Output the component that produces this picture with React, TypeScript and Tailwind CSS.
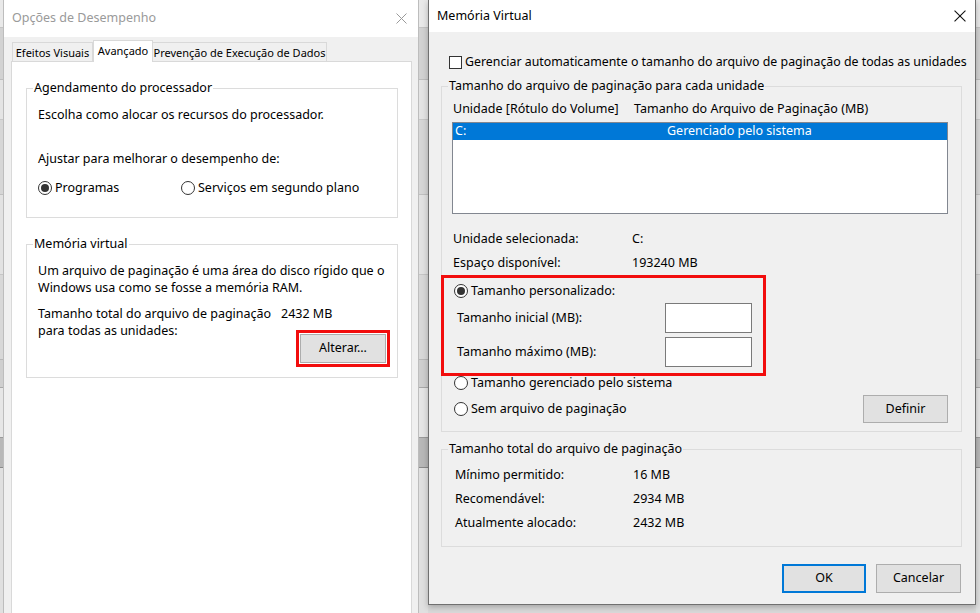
import React from "react";

function XIcon({ color, size = 11 }: { color: string; size?: number }) {
  return (
    <svg width={size} height={size} viewBox="0 0 11 11" className="shrink-0">
      <path d="M0.5 0.5 L10.5 10.5 M10.5 0.5 L0.5 10.5" stroke={color} strokeWidth="1" fill="none" />
    </svg>
  );
}

function Radio({ checked }: { checked?: boolean }) {
  return (
    <span className="w-[14px] h-[14px] rounded-full border border-[#333] bg-white flex items-center justify-center shrink-0">
      {checked && <span className="w-[8px] h-[8px] rounded-full bg-[#333]" />}
    </span>
  );
}

function LeftDialog() {
  return (
    <div className="w-[416px] h-[640px] shrink-0 flex flex-col bg-[#f0f0f0] border-x border-[#bdbdbd]">
      <div className="h-[37px] bg-white flex items-center justify-between pl-[8px] pr-[11px] shrink-0">
        <span className="text-[12.5px] text-[#9a9a9a]">Opções de Desempenho</span>
        <XIcon color="#9a9a9a" />
      </div>
      <div className="pl-[7px] pt-[3px]">
        <div className="flex items-end h-[21px] pl-[1px] text-[11px] text-black whitespace-nowrap">
          <div className="w-[81px] h-[19px] border border-b-0 border-[#d9d9d9] bg-[#f0f0f0] flex items-center justify-center leading-none">
            Efeitos Visuais
          </div>
          <div className="relative z-10 w-[60px] h-[22px] -mb-px border border-b-0 border-[#d9d9d9] bg-white flex items-center justify-center leading-none pb-[3px]">
            Avançado
          </div>
          <div className="w-[174px] h-[19px] border border-b-0 border-l-0 border-[#d9d9d9] bg-[#f0f0f0] flex items-center justify-center leading-none">
            Prevenção de Execução de Dados
          </div>
        </div>
        <div className="w-[401px] h-[570px] bg-white border border-[#d9d9d9] text-[12.5px] text-black">
          <fieldset className="ml-[14px] mt-[17px] w-[372px] border border-[#dcdcdc]">
            <legend className="ml-[6px] px-[1px] leading-[18px]">Agendamento do processador</legend>
            <div className="pl-[11px] pb-[20px]">
              <div className="mt-[9px] leading-[18px]">Escolha como alocar os recursos do processador.</div>
              <div className="mt-[26px] leading-[18px]">Ajustar para melhorar o desempenho de:</div>
              <div className="mt-[11px] flex items-center h-[18px]">
                <div className="w-[143px] flex items-center gap-[3px]">
                  <Radio checked />
                  <span>Programas</span>
                </div>
                <div className="flex items-center gap-[3px]">
                  <Radio />
                  <span>Serviços em segundo plano</span>
                </div>
              </div>
            </div>
          </fieldset>
          <fieldset className="ml-[14px] mt-[17px] w-[372px] border border-[#dcdcdc]">
            <legend className="ml-[6px] px-[1px] leading-[18px]">Memória virtual</legend>
            <div className="pl-[11px] pb-[10px]">
              <div className="mt-[9px] leading-[17px]">
                <div>Um arquivo de paginação é uma área do disco rígido que o</div>
                <div>Windows usa como se fosse a memória RAM.</div>
              </div>
              <div className="mt-[9px] leading-[17px]">
                <div className="flex">
                  <span className="w-[243px] shrink-0">Tamanho total do arquivo de paginação</span>
                  <span>2432 MB</span>
                </div>
                <div>para todas as unidades:</div>
              </div>
              <div className="-mt-[9px] flex justify-end pr-[7px]">
                <div className="border-[3px] border-[#f20d0d] p-[1px]">
                  <div className="w-[86px] h-[29px] bg-[#e1e1e1] border border-[#adadad] flex items-center justify-center">
                    Alterar...
                  </div>
                </div>
              </div>
            </div>
          </fieldset>
        </div>
      </div>
    </div>
  );
}

function RightDialog() {
  return (
    <div className="relative w-[548px] h-[605px] shrink-0 flex flex-col border-x border-b border-[#707070] bg-[#f0f0f0] text-[12.5px] text-black shadow-[0_2px_6px_rgba(0,0,0,0.25)]">
      <div className="h-[32px] bg-white flex items-center justify-between pl-[8px] pr-[9px] shrink-0">
        <span className="text-[12.5px]">Memória Virtual</span>
        <XIcon color="#111" size={12} />
      </div>
      <div className="flex flex-col flex-1">
        <div className="mt-[21px] pl-[20px] flex items-center gap-[3px] h-[18px] whitespace-nowrap text-[12.35px]">
          <span className="w-[13px] h-[13px] border border-[#333] bg-white shrink-0" />
          <span>Gerenciar automaticamente o tamanho do arquivo de paginação de todas as unidades</span>
        </div>

        <fieldset className="ml-[12px] mt-[6px] w-[521px] border border-[#dcdcdc]">
          <legend className="ml-[6px] px-[1px] leading-[18px]">Tamanho do arquivo de paginação para cada unidade</legend>
          <div className="pb-[8px]">
            <div className="mt-[5px] pl-[11px] flex leading-[18px]">
              <span className="w-[181px] shrink-0">Unidade [Rótulo do Volume]</span>
              <span>Tamanho do Arquivo de Paginação (MB)</span>
            </div>
            <div className="ml-[10px] mt-[4px] w-[496px] h-[92px] bg-white border border-[#828790]">
              <div className="h-[17px] bg-[#0078d7] text-white flex items-center">
                <span className="w-[214px] pl-[2px] shrink-0">C:</span>
                <span>Gerenciado pelo sistema</span>
              </div>
            </div>
            <div className="mt-[13px] pl-[11px]">
              <div className="h-[24px] flex items-center">
                <span className="w-[179px] shrink-0">Unidade selecionada:</span>
                <span>C:</span>
              </div>
              <div className="h-[24px] flex items-center">
                <span className="w-[179px] shrink-0">Espaço disponível:</span>
                <span>193240 MB</span>
              </div>
            </div>
            <div className="mt-[7px] ml-[12px] h-[18px] flex items-center gap-[3px]">
              <Radio checked />
              <span>Tamanho personalizado:</span>
            </div>
            <div className="mt-[3px] ml-[15px] h-[30px] flex items-center">
              <span className="w-[208px] shrink-0">Tamanho inicial (MB):</span>
              <span className="w-[87px] h-[30px] bg-white border border-[#7a7a7a]" />
            </div>
            <div className="mt-[4px] ml-[15px] h-[30px] flex items-center">
              <span className="w-[208px] shrink-0">Tamanho máximo (MB):</span>
              <span className="w-[87px] h-[30px] bg-white border border-[#7a7a7a]" />
            </div>
            <div className="mt-[7px] ml-[12px] h-[18px] flex items-center gap-[3px]">
              <Radio />
              <span>Tamanho gerenciado pelo sistema</span>
            </div>
            <div className="mt-[3px] ml-[12px] mr-[13px] h-[28px] flex items-center justify-between">
              <div className="flex items-center gap-[3px]">
                <Radio />
                <span>Sem arquivo de paginação</span>
              </div>
              <div className="w-[85px] h-[28px] bg-[#e1e1e1] border border-[#adadad] flex items-center justify-center">
                Definir
              </div>
            </div>
          </div>
        </fieldset>

        <fieldset className="ml-[12px] mt-[8px] w-[521px] border border-[#dcdcdc]">
          <legend className="ml-[6px] px-[1px] leading-[18px]">Tamanho total do arquivo de paginação</legend>
          <div className="mt-[5px] pl-[13px] pb-[11px]">
            <div className="h-[24px] flex items-center">
              <span className="w-[178px] shrink-0">Mínimo permitido:</span>
              <span>16 MB</span>
            </div>
            <div className="h-[24px] flex items-center">
              <span className="w-[178px] shrink-0">Recomendável:</span>
              <span>2934 MB</span>
            </div>
            <div className="h-[24px] flex items-center">
              <span className="w-[178px] shrink-0">Atualmente alocado:</span>
              <span>2432 MB</span>
            </div>
          </div>
        </fieldset>

        <div className="mt-[17px] pr-[14px] flex justify-end gap-[10px]">
          <div className="w-[84px] h-[29px] bg-[#e1e1e1] border-2 border-[#0078d7] flex items-center justify-center">
            OK
          </div>
          <div className="w-[85px] h-[29px] bg-[#e1e1e1] border border-[#adadad] flex items-center justify-center">
            Cancelar
          </div>
        </div>
      </div>
      <div className="absolute left-[12px] top-[275px] w-[325px] h-[101px] border-[3px] border-[#f20d0d]" />
    </div>
  );
}

function Strip({ w }: { w: string }) {
  return (
    <div className={`${w} shrink-0 h-full flex flex-col bg-[#dedede]`}>
      <div className="h-[28px] bg-[#e9e9e9] border-b border-[#c4c4c4]" />
      <div className="h-[52px] bg-[#d2d2d2] border-b border-[#bdbdbd]" />
      <div className="h-[40px] bg-[#e4e4e4] border-b border-[#c8c8c8]" />
      <div className="h-[75px] bg-[#d6d6d6] border-b border-[#c0c0c0]" />
      <div className="h-[80px] bg-[#e2e2e2] border-b border-[#c6c6c6]" />
      <div className="h-[85px] bg-[#d8d8d8] border-b border-[#b8b8b8]" />
      <div className="h-[28px] bg-[#cfcfcf] border-b border-[#a8a8a8]" />
      <div className="h-[50px] bg-[#e6e6e6] border-b border-[#9a9a9a]" />
      <div className="h-[30px] bg-[#b8b8b8] border-b border-[#8a8a8a]" />
      <div className="flex-1 bg-[#e0e0e0]" />
    </div>
  );
}

export default function App() {
  return (
    <div className="w-[980px] h-[613px] overflow-hidden flex items-start bg-[#d9d9d9] font-['Noto_Sans',sans-serif]">
      <Strip w="w-[3px]" />
      <LeftDialog />
      <Strip w="w-[9px]" />
      <RightDialog />
      <Strip w="w-[4px]" />
    </div>
  );
}
